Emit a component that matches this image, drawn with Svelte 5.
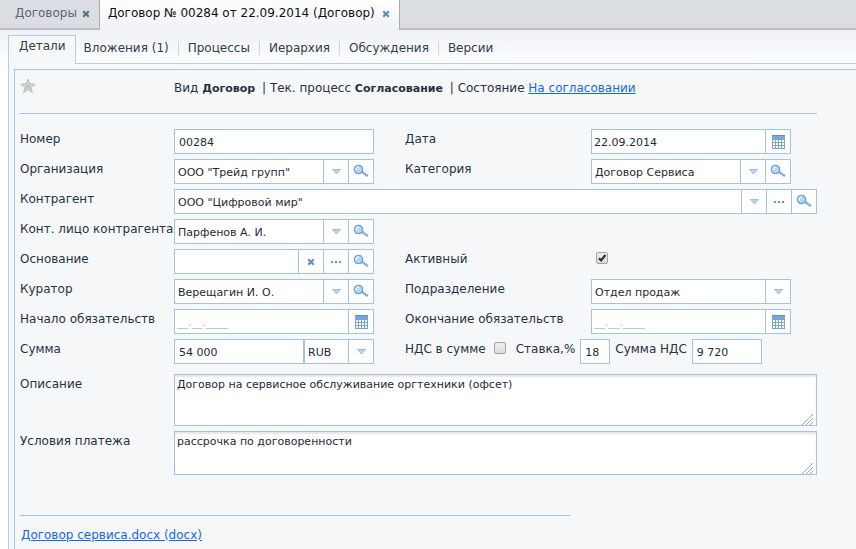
<script>
  const sections = ['Детали', 'Вложения (1)', 'Процессы', 'Иерархия', 'Обсуждения', 'Версии'];

  let form = $state({
    number: '00284',
    date: '22.09.2014',
    basis: '',
    active: true,
    start: '',
    end: '',
    sum: '54 000',
    vatIncluded: false,
    rate: '18',
    vat: '9 720',
    description: 'Договор на сервисное обслуживание оргтехники (офсет)',
    terms: 'рассрочка по договоренности'
  });
</script>

{#snippet cross()}
  <svg class="cross" width="8" height="8" viewBox="0 0 8 8" aria-hidden="true">
    <path d="M1.2 1.2 6.8 6.8M6.8 1.2 1.2 6.8" fill="none" stroke="currentColor" stroke-width="2.3" />
  </svg>
{/snippet}

{#snippet dots()}
  <svg width="12" height="4" viewBox="0 0 12 4" aria-hidden="true">
    <path d="M1 1h2v2H1zM5 1h2v2H5zM9 1h2v2H9z" fill="#5f97cb" />
  </svg>
{/snippet}

{#snippet lens()}
  <svg width="16" height="16" viewBox="0 0 16 16" aria-hidden="true">
    <path d="M9 7.8 14.2 11.4" fill="none" stroke="#7ba6d1" stroke-width="2.4" stroke-linecap="round" />
    <path d="M9.4 7.5 14.4 11" fill="none" stroke="#b9d3ec" stroke-width="0.9" />
    <circle cx="5.5" cy="5.5" r="4.2" fill="#b4d7f5" stroke="#6d9fd0" stroke-width="1.2" />
    <path d="M3.2 5.8C3.2 4.2 4 3.1 5.8 2.9" fill="none" stroke="#eef7ff" stroke-width="1.4" />
  </svg>
{/snippet}

{#snippet calendar()}
  <svg width="13" height="14" viewBox="0 0 13 14" aria-hidden="true">
    <path d="M0 0h13v14H0z" fill="#7aa5d2" />
    <path d="M0 0h13v1H0z" fill="#5d8fc4" />
    <path d="M1 1h11v3H1z" fill="#78a6d5" />
    <path d="M1 5h2v2H1zM4 5h2v2H4zM7 5h2v2H7zM10 5h2v2h-2zM1 8h2v2H1zM4 8h2v2H4zM7 8h2v2H7zM10 8h2v2h-2zM1 11h2v2H1zM4 11h2v2H4zM7 11h2v2H7zM10 11h2v2h-2z" fill="#fff" />
  </svg>
{/snippet}

{#snippet picker(id, value)}
  <span class="picker">
    <select {id}><option>{value}</option></select>
    <span class="arrow">
      <svg width="9" height="6" viewBox="0 0 9 6" aria-hidden="true">
        <path d="M.5 .5h8L4.5 5z" fill="#b9d3ec" stroke="#9dbddc" />
      </svg>
    </span>
  </span>
{/snippet}

{#snippet tool(label, icon)}
  <button class="tool" type="button" aria-label={label}>{@render icon()}</button>
{/snippet}

{#snippet grip()}
  <svg class="grip" width="11" height="11" viewBox="0 0 11 11" aria-hidden="true">
    <path d="M0 11 11 0M4 11 11 4M8 11 11 8" fill="none" stroke="#8fb3d4" />
  </svg>
{/snippet}

<div class="app">
  <header class="documents">
    <div class="doc">
      <a href="#contracts">Договоры</a>
      <button type="button" aria-label="Закрыть">{@render cross()}</button>
    </div>
    <div class="doc current">
      <a href="#contract">Договор № 00284 от 22.09.2014 (Договор)</a>
      <button type="button" aria-label="Закрыть">{@render cross()}</button>
    </div>
    <div class="rest"></div>
  </header>

  <nav class="sections">
    {#each sections as name, i}
      <a href="#section-{i}" class:selected={i === 0}>{name}</a>
    {/each}
  </nav>

  <main class="outer">
    <div class="inner">
      <div class="summary">
        <button class="star" type="button" aria-label="В избранное">
          <svg width="16" height="16" viewBox="0 0 16 16" aria-hidden="true">
            <path d="M8 1.2 9.9 5.8 15 6.2 11.1 9.5 12.4 14.5 8 11.8 3.6 14.5 4.9 9.5 1 6.2 6.1 5.8Z" fill="#dcdcdc" stroke="#b9b9b9" />
            <path d="M8 4.5 9.2 7.2 12 7.4 9.8 9.2 10.5 12 8 10.5 5.5 12 6.2 9.2 4 7.4 6.8 7.2Z" fill="#c2c2c2" />
          </svg>
        </button>
        <p>Вид <b>Договор</b> | Тек. процесс <b>Согласование</b> | Состояние <a href="#state">На согласовании</a></p>
      </div>

      <form class="fields">
        <label for="number">Номер</label>
        <div class="box"><input id="number" class="inset" bind:value={form.number} /></div>
        <label class="second" for="date">Дата</label>
        <div class="box"><input id="date" bind:value={form.date} />{@render tool('Календарь', calendar)}</div>

        <label for="company">Организация</label>
        <div class="box">{@render picker('company', 'ООО "Трейд групп"')}{@render tool('Открыть', lens)}</div>
        <label class="second" for="category">Категория</label>
        <div class="box">{@render picker('category', 'Договор Сервиса')}{@render tool('Открыть', lens)}</div>

        <label for="partner">Контрагент</label>
        <div class="box full">{@render picker('partner', 'ООО "Цифровой мир"')}{@render tool('Выбрать', dots)}{@render tool('Открыть', lens)}</div>

        <label for="contact">Конт. лицо контрагента</label>
        <div class="box">{@render picker('contact', 'Парфенов А. И.')}{@render tool('Открыть', lens)}</div>

        <label for="basis">Основание</label>
        <div class="box">
          <input id="basis" bind:value={form.basis} />
          {@render tool('Очистить', cross)}{@render tool('Выбрать', dots)}{@render tool('Открыть', lens)}
        </div>
        <label class="second" for="active">Активный</label>
        <div class="tick"><input id="active" type="checkbox" bind:checked={form.active} /></div>

        <label for="curator">Куратор</label>
        <div class="box">{@render picker('curator', 'Верещагин И. О.')}{@render tool('Открыть', lens)}</div>
        <label class="second" for="unit">Подразделение</label>
        <div class="box">{@render picker('unit', 'Отдел продаж')}</div>

        <label for="start">Начало обязательств</label>
        <div class="box"><input id="start" placeholder="__.__.____" bind:value={form.start} />{@render tool('Календарь', calendar)}</div>
        <label class="second" for="end">Окончание обязательств</label>
        <div class="box"><input id="end" placeholder="__.__.____" bind:value={form.end} />{@render tool('Календарь', calendar)}</div>

        <label for="sum">Сумма</label>
        <div class="money">
          <div class="box"><input id="sum" class="inset" bind:value={form.sum} /></div>
          <div class="box currency" aria-label="Валюта">{@render picker('currency', 'RUB')}</div>
        </div>
        <div class="vat">
          <label for="included">НДС в сумме</label>
          <input id="included" type="checkbox" bind:checked={form.vatIncluded} />
          <label for="rate">Ставка,%</label>
          <div class="box rate"><input id="rate" class="inset" bind:value={form.rate} /></div>
          <label for="vat">Сумма НДС</label>
          <div class="box amount"><input id="vat" class="inset" bind:value={form.vat} /></div>
        </div>

        <label class="lower" for="description">Описание</label>
        <div class="area lower">
          <textarea id="description" class="tall" bind:value={form.description}></textarea>
          {@render grip()}
        </div>

        <label for="terms">Условия платежа</label>
        <div class="area">
          <textarea id="terms" bind:value={form.terms}></textarea>
          {@render grip()}
        </div>
      </form>

      <footer><a href="#file">Договор сервиса.docx (docx)</a></footer>
    </div>
  </main>
</div>

<style>
  :global(body) {
    margin: 0;
  }
  .app {
    --line: #a3c3df;
    box-sizing: border-box;
    display: flex;
    flex-direction: column;
    min-height: 100vh;
    font-family: Verdana, 'DejaVu Sans', sans-serif;
    font-size: 12px;
    line-height: 20px;
    color: #28323f;
    background: linear-gradient(#fff 0, #eff1f6 30px, #f7f8fb 50px, #fff 64px);
  }
  .app * {
    box-sizing: border-box;
  }
  button {
    display: flex;
    align-items: center;
    justify-content: center;
    padding: 0;
    border: 0;
    background: none;
    color: #5f93c6;
  }
  .documents {
    display: flex;
    height: 30px;
  }
  .doc,
  .rest {
    background: #dadde2;
    border-bottom: 2px solid #bcbec2;
  }
  .doc {
    display: flex;
    gap: 5px;
    padding: 3px 9px 0 15px;
    border-right: 1px solid #a9abae;
    white-space: nowrap;
  }
  .doc a {
    color: #5b6673;
    text-decoration: none;
  }
  .doc button {
    height: 22px;
    color: #5c738c;
  }
  .doc.current {
    gap: 7px;
    padding-left: 8px;
    background: none;
    border-bottom: 0;
  }
  .doc.current a {
    color: #111;
  }
  .doc.current button {
    color: #5a8fc4;
  }
  .rest {
    flex: 1;
  }
  .sections {
    display: flex;
    height: 33px;
    padding: 5px 0 0 8px;
  }
  .sections a {
    position: relative;
    padding: 3px 9px 0 10px;
    color: #333c48;
    text-decoration: none;
    white-space: nowrap;
  }
  .sections a:nth-child(2) {
    padding-left: 8px;
  }
  .sections a:nth-child(n + 3) {
    background: linear-gradient(#c3d7e8, #c3d7e8) 0 6px / 1px 14px no-repeat;
  }
  .sections .selected {
    z-index: 1;
    height: 29px;
    padding-top: 0;
    border: 1px solid #b1cee5;
    border-bottom: 0;
    background: #f5f7f9;
  }
  .outer {
    display: flex;
    flex: 1;
    margin-left: 8px;
    padding: 5px 0 0 5px;
    border: solid #b1cee5;
    border-width: 1px 0 0 1px;
    background: #f5f7f9;
  }
  .inner {
    flex: 1;
    padding: 0 39px 0 5px;
    border: solid var(--line);
    border-width: 1px 0 0 1px;
  }
  .summary {
    display: flex;
    height: 44px;
    padding-top: 8px;
    border-bottom: 1px solid var(--line);
  }
  .star {
    width: 16px;
    height: 16px;
  }
  .summary p {
    margin: 0 0 0 138px;
    white-space: nowrap;
  }
  .summary b {
    margin-right: 3px;
    font-size: 11px;
  }
  .summary a,
  footer a {
    color: #1668e8;
  }
  .fields {
    display: grid;
    grid-template-columns: 154px minmax(200px, 1fr) 217px minmax(200px, 1fr) 26px;
    row-gap: 5px;
    padding-top: 15px;
  }
  label {
    grid-column: 1;
    white-space: nowrap;
  }
  .second {
    grid-column: 3;
    padding-left: 31px;
  }
  .box {
    display: flex;
    height: 25px;
    min-width: 0;
    border: 1px solid var(--line);
    background: #fff;
  }
  .full {
    grid-column: 2 / 6;
  }
  .box input,
  select,
  textarea {
    flex: 1;
    min-width: 0;
    width: 100%;
    margin: 0;
    padding: 2px 2px 0;
    border: 0;
    outline: 0;
    background: none;
    font: 11px Verdana, 'DejaVu Sans', sans-serif;
    color: #1f2933;
  }
  .box input.inset {
    padding-left: 4px;
  }
  input::placeholder {
    color: #b8b8b8;
  }
  .picker {
    position: relative;
    display: flex;
    flex: 1;
    min-width: 0;
  }
  select {
    appearance: none;
    padding: 2px 25px 0 3px;
  }
  .arrow {
    position: absolute;
    inset: 0 0 0 auto;
    display: flex;
    align-items: center;
    justify-content: center;
    width: 25px;
    border-left: 1px solid var(--line);
    pointer-events: none;
  }
  .tool {
    flex: none;
    width: 25px;
    border-left: 1px solid var(--line);
  }
  input[type='checkbox'] {
    appearance: none;
    width: 12px;
    height: 12px;
    margin: 0;
    border: 1px solid #a2a2a2;
    border-radius: 2px;
    background: linear-gradient(#eee, #dcdcdc);
  }
  input[type='checkbox']:checked {
    background: url("data:image/svg+xml,%3Csvg xmlns='http://www.w3.org/2000/svg' viewBox='0 0 10 10'%3E%3Cpath d='M2 5.2 4.1 7.4 8.4 2' fill='none' stroke='%23333' stroke-width='2.2'/%3E%3C/svg%3E"), linear-gradient(#eee, #dcdcdc);
  }
  .tick {
    display: flex;
    padding: 3px 0 0 5px;
  }
  .money {
    display: flex;
  }
  .money .box {
    flex: 1;
  }
  .money .currency {
    flex: none;
    width: 70px;
  }
  .vat {
    grid-column: 3 / 6;
    display: flex;
    padding-left: 31px;
  }
  .vat input[type='checkbox'] {
    margin: 3px 10px 0 8px;
  }
  .vat .rate {
    width: 30px;
    margin: 0 5px;
  }
  .vat .amount {
    width: 70px;
    margin-left: 5px;
  }
  .lower {
    margin-top: 5px;
  }
  .area {
    grid-column: 2 / 6;
    position: relative;
    display: flex;
  }
  textarea {
    height: 44px;
    padding: 3px 2px;
    border: 1px solid var(--line);
    background: #fff;
    box-shadow: inset 0 2px 2px #e6e6e6;
    resize: none;
  }
  textarea.tall {
    height: 52px;
  }
  .grip {
    position: absolute;
    right: 4px;
    bottom: 1px;
    pointer-events: none;
  }
  footer {
    width: 550px;
    max-width: 100%;
    margin-top: 40px;
    padding: 9px 1px 0;
    border-top: 1px solid var(--line);
  }
</style>
